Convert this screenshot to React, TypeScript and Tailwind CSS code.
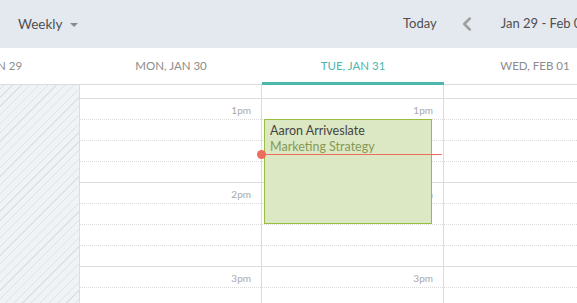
import { ChevronLeft } from 'lucide-react'

const days = [
    { label: 'SUN, JAN 29', past: true },
    { label: 'MON, JAN 30' },
    { label: 'TUE, JAN 31', today: true },
    { label: 'WED, FEB 01' },
]

const hours = ['1pm', '2pm', '3pm']

function HourBlock({ label }: { label: string }) {
    return (
        <div className="border-t border-[#dcdcdc]">
            <div className="h-[21px] border-b border-dotted border-[#dadada] pr-[10px] pt-px text-right text-[10px] leading-[20px] text-[#a8a8a8]">
                {label}
            </div>
            <div className="h-[21px] border-b border-dotted border-[#dadada]" />
            <div className="h-[21px] border-b border-dotted border-[#dadada]" />
            <div className="h-[20px]" />
        </div>
    )
}

function DayColumn({ past, today }: { past?: boolean; today?: boolean }) {
    if (past) {
        return (
            <div className="h-full w-[182px] shrink-0 border-r border-[#dcdcdc] bg-[#eff3f6] bg-[image:repeating-linear-gradient(135deg,#dbe1e7_0px,#dbe1e7_0.9px,transparent_0.9px,transparent_6.2px)]" />
        )
    }
    return (
        <div className="relative h-full w-[182px] shrink-0 border-r border-[#dcdcdc]">
            <div className="h-[13px]" />
            {hours.map((h) => (
                <HourBlock key={h} label={h} />
            ))}
            {today && (
                <>
                    <div className="absolute left-[2px] top-[34px] h-[105px] w-[168px] border border-[#99be3e] bg-[#dce8c4] px-[5px] pt-[2.5px]">
                        <div className="text-[12.5px] leading-[16px] text-[#444]">Aaron Arriveslate</div>
                        <div className="text-[12.5px] leading-[16px] text-[#879a55]">Marketing Strategy</div>
                    </div>
                    <div className="absolute left-0 top-[69px] h-px w-[180px] bg-[#ee6b60]" />
                    <div className="absolute left-[-5px] top-[65px] h-[9px] w-[9px] rounded-full bg-[#ee6b60]" />
                </>
            )}
        </div>
    )
}

export default function App() {
    return (
        <div className="h-[303px] w-[577px] overflow-hidden bg-white font-['Lato',sans-serif]">
            <div className="flex h-12 items-center overflow-hidden whitespace-nowrap bg-[#e4e9f0] text-[13px] text-[#4f4f4f]">
                <div className="flex w-[403px] shrink-0 items-center pl-[18px]">
                    <span className="text-[13.5px]">Weekly</span>
                    <span className="ml-[8px] mt-[1px] h-0 w-0 border-x-[4px] border-t-[4px] border-x-transparent border-t-[#8a8a8a]" />
                </div>
                <span className="shrink-0">Today</span>
                <ChevronLeft className="ml-[19px] h-[22px] w-[22px] shrink-0 text-[#a0a0a0]" strokeWidth={2.8} />
                <span className="ml-[23px] shrink-0">Jan 29 - Feb 04, 2017</span>
            </div>
            <div className="-ml-[102px] flex h-[37px]">
                {days.map((d) => (
                    <div
                        key={d.label}
                        className={
                            d.today
                                ? 'flex w-[182px] shrink-0 items-center justify-center border-b-[3px] border-[#4db6ad] pt-[2px] text-[11.5px] text-[#4db6ad]'
                                : 'flex w-[182px] shrink-0 items-center justify-center border-b border-[#dcdcdc] text-[11.5px] text-[#8c8c8c]'
                        }
                    >
                        {d.label}
                    </div>
                ))}
            </div>
            <div className="-ml-[102px] flex h-[218px] overflow-hidden">
                {days.map((d) => (
                    <DayColumn key={d.label} past={d.past} today={d.today} />
                ))}
            </div>
        </div>
    )
}
